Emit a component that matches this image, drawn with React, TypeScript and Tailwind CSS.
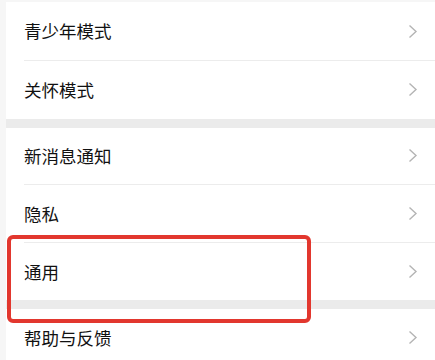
const groups = [
  ['青少年模式', '关怀模式'],
  ['新消息通知', '隐私', '通用'],
  ['帮助与反馈'],
]

function Chevron() {
  return (
    <svg width="10" height="15" viewBox="0 0 10 15" fill="none" className="flex-shrink-0">
      <polyline points="1.5,1.5 8,7.5 1.5,13.5" stroke="#b4b4b4" strokeWidth="1.4" strokeLinejoin="miter" />
    </svg>
  )
}

function Row({ label, first, last }: { label: string; first: boolean; last: boolean }) {
  return (
    <div className="pl-[18px] bg-white">
      <div
        className={`flex items-center justify-between pr-[17px] ${first ? 'h-[59px]' : 'h-[57.5px]'} ${
          last ? '' : 'border-b border-[#ececec]'
        }`}
      >
        <span className="text-[17.5px] text-[#111111] leading-none">{label}</span>
        <Chevron />
      </div>
    </div>
  )
}

export default function App() {
  return (
    <div
      className="relative w-[435px] h-[360px] overflow-hidden bg-[#f6f6f6] pl-[6px] pt-[2px]"
      style={{ fontFamily: '"Noto Sans CJK SC", "Noto Sans", sans-serif' }}
    >
      <div className="flex flex-col">
        {groups.map((items, gi) => (
          <div key={gi} className="flex flex-col">
            {gi > 0 && <div className="h-[9px] bg-[#ebebeb]" />}
            {items.map((label, i) => (
              <Row
                key={label}
                label={label}
                first={gi === 0 && i === 0}
                last={i === items.length - 1}
              />
            ))}
          </div>
        ))}
      </div>

      {/* Markierung */}
      <div className="absolute left-[7px] top-[235px] w-[304px] h-[88px] border-[4px] border-[#e2372e] rounded-[6px]" />
    </div>
  )
}
